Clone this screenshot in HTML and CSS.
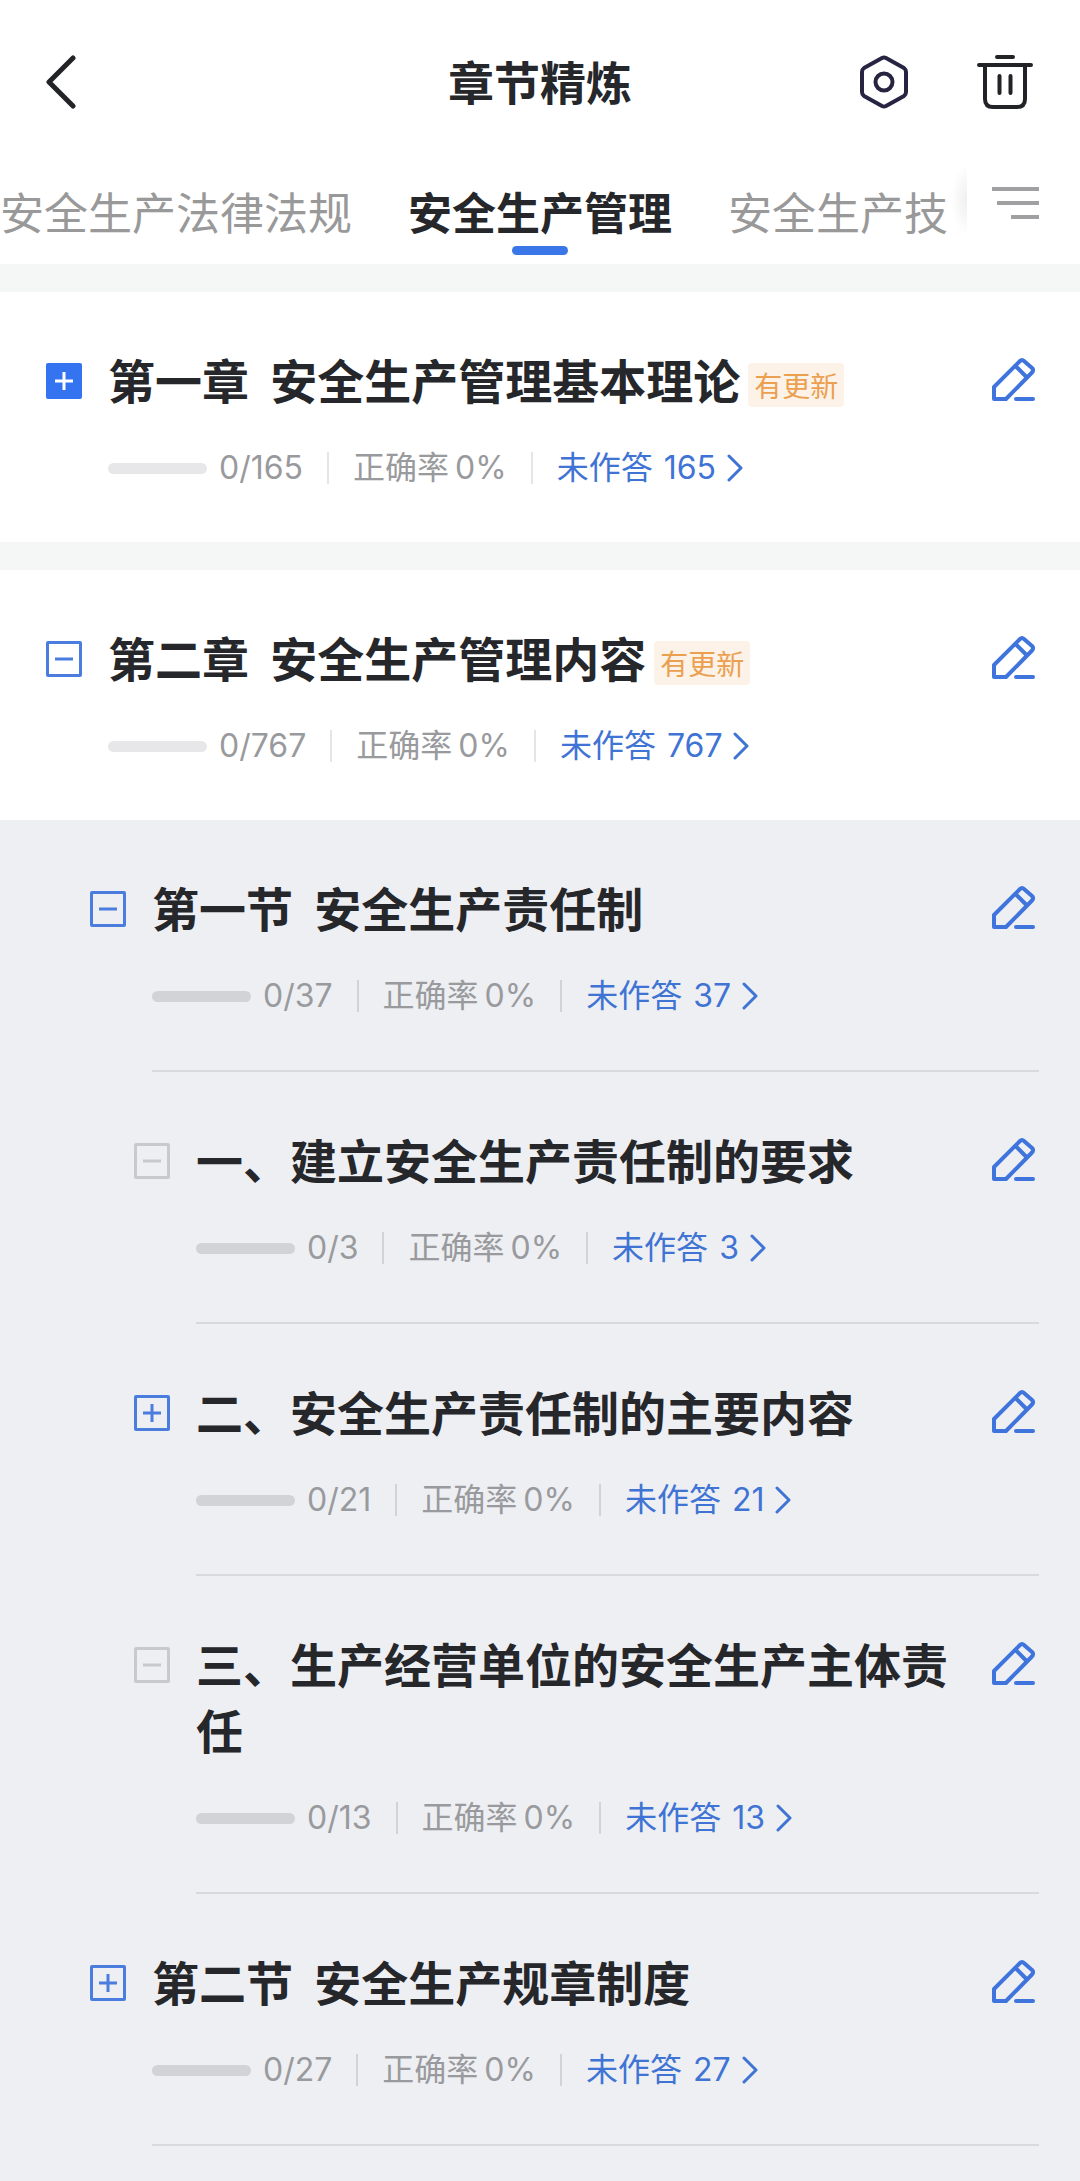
FILE: index.html
```html
<!DOCTYPE html>
<html lang="zh-CN">

<head>
  <meta charset="UTF-8">
  <meta name="viewport" content="width=device-width, initial-scale=1.0">
  <title>章节精炼</title>
  <link rel="stylesheet" href="styles.css">
</head>

<body>
  <!-- Shared icons -->
  <svg class="sprite" aria-hidden="true">
    <symbol id="icon-edit" viewBox="0 0 44 44">
      <path d="M3 42V30L29 4Q31 2 33 4L41 11Q43 13 41 15.500L15 42Z" />
      <path d="M24.500 9L35 19.500" />
      <path d="M25 42H42" />
    </symbol>
    <symbol id="icon-arrow" viewBox="0 0 16 28">
      <path d="M2 2L14 14L2 26" />
    </symbol>
    <symbol id="icon-plus" viewBox="0 0 36 36">
      <path d="M9 18H27M18 9V27" />
    </symbol>
    <symbol id="icon-minus" viewBox="0 0 36 36">
      <path d="M9 18H27" />
    </symbol>
  </svg>

  <header class="navbar">
    <button class="icon-btn" aria-label="返回">
      <svg class="icon-back" viewBox="0 0 32 54"><path d="M27 3L3 27L27 51" /></svg>
    </button>
    <h1 class="navbar-title">章节精炼</h1>
    <div class="navbar-actions">
      <button class="icon-btn" aria-label="设置">
        <svg class="icon-setting" viewBox="0 0 50 54">
          <path d="M23 3Q25 2 27 3L45 13Q47 14.500 47 17V37Q47 39.500 45 41L27 51Q25 52 23 51L5 41Q3 39.500 3 37V17Q3 14.500 5 13Z" />
          <circle cx="25" cy="27" r="8.500" />
        </svg>
      </button>
      <button class="icon-btn" aria-label="删除">
        <svg class="icon-trash" viewBox="0 0 58 56">
          <path d="M21 3H37M3 11H55M9 11V45Q9 53 17 53H41Q49 53 49 45V11M23.500 22V39M34.500 22V39" />
        </svg>
      </button>
    </div>
  </header>

  <nav class="tabs">
    <div class="tabs-list">
      <a class="tab" href="#">安全生产法律法规</a>
      <a class="tab active" href="#">安全生产管理</a>
      <a class="tab" href="#">安全生产技</a>
    </div>
    <button class="icon-btn tabs-more" aria-label="全部科目">
      <svg class="icon-menu" viewBox="0 0 48 34"><path d="M1 3H48M6 17H48M20 31H48" /></svg>
    </button>
  </nav>

  <main>
    <section class="chapter">
      <article class="row">
        <button class="toggle filled" aria-label="展开"><svg><use href="#icon-plus" /></svg></button>
        <div class="content">
          <div class="head">
            <h2 class="title">第一章&nbsp; 安全生产管理基本理论<span class="tag">有更新</span></h2>
            <button class="icon-btn edit" aria-label="练习"><svg><use href="#icon-edit" /></svg></button>
          </div>
          <div class="stats">
            <span class="bar"></span>
            <span class="count">0/165</span>
            <span class="rate">正确率<span class="num">0%</span></span>
            <a class="todo" href="#">未作答 <span>165</span><svg><use href="#icon-arrow" /></svg></a>
          </div>
        </div>
      </article>
    </section>

    <section class="chapter">
      <article class="row">
        <button class="toggle" aria-label="收起"><svg><use href="#icon-minus" /></svg></button>
        <div class="content">
          <div class="head">
            <h2 class="title">第二章&nbsp; 安全生产管理内容<span class="tag">有更新</span></h2>
            <button class="icon-btn edit" aria-label="练习"><svg><use href="#icon-edit" /></svg></button>
          </div>
          <div class="stats">
            <span class="bar"></span>
            <span class="count">0/767</span>
            <span class="rate">正确率<span class="num">0%</span></span>
            <a class="todo" href="#">未作答 <span>767</span><svg><use href="#icon-arrow" /></svg></a>
          </div>
        </div>
      </article>
    </section>

    <section class="sections">
      <article class="row level-2">
        <button class="toggle" aria-label="收起"><svg><use href="#icon-minus" /></svg></button>
        <div class="content">
          <div class="head">
            <h3 class="title">第一节&nbsp; 安全生产责任制</h3>
            <button class="icon-btn edit" aria-label="练习"><svg><use href="#icon-edit" /></svg></button>
          </div>
          <div class="stats">
            <span class="bar"></span>
            <span class="count">0/37</span>
            <span class="rate">正确率<span class="num">0%</span></span>
            <a class="todo" href="#">未作答 <span>37</span><svg><use href="#icon-arrow" /></svg></a>
          </div>
        </div>
      </article>

      <article class="row level-3">
        <button class="toggle disabled" aria-label="收起" disabled><svg><use href="#icon-minus" /></svg></button>
        <div class="content">
          <div class="head">
            <h4 class="title">一、建立安全生产责任制的要求</h4>
            <button class="icon-btn edit" aria-label="练习"><svg><use href="#icon-edit" /></svg></button>
          </div>
          <div class="stats">
            <span class="bar"></span>
            <span class="count">0/3</span>
            <span class="rate">正确率<span class="num">0%</span></span>
            <a class="todo" href="#">未作答 <span>3</span><svg><use href="#icon-arrow" /></svg></a>
          </div>
        </div>
      </article>

      <article class="row level-3">
        <button class="toggle" aria-label="展开"><svg><use href="#icon-plus" /></svg></button>
        <div class="content">
          <div class="head">
            <h4 class="title">二、安全生产责任制的主要内容</h4>
            <button class="icon-btn edit" aria-label="练习"><svg><use href="#icon-edit" /></svg></button>
          </div>
          <div class="stats">
            <span class="bar"></span>
            <span class="count">0/21</span>
            <span class="rate">正确率<span class="num">0%</span></span>
            <a class="todo" href="#">未作答 <span>21</span><svg><use href="#icon-arrow" /></svg></a>
          </div>
        </div>
      </article>

      <article class="row level-3">
        <button class="toggle disabled" aria-label="收起" disabled><svg><use href="#icon-minus" /></svg></button>
        <div class="content">
          <div class="head">
            <h4 class="title">三、生产经营单位的安全生产主体责任</h4>
            <button class="icon-btn edit" aria-label="练习"><svg><use href="#icon-edit" /></svg></button>
          </div>
          <div class="stats">
            <span class="bar"></span>
            <span class="count">0/13</span>
            <span class="rate">正确率<span class="num">0%</span></span>
            <a class="todo" href="#">未作答 <span>13</span><svg><use href="#icon-arrow" /></svg></a>
          </div>
        </div>
      </article>

      <article class="row level-2">
        <button class="toggle" aria-label="展开"><svg><use href="#icon-plus" /></svg></button>
        <div class="content">
          <div class="head">
            <h3 class="title">第二节&nbsp; 安全生产规章制度</h3>
            <button class="icon-btn edit" aria-label="练习"><svg><use href="#icon-edit" /></svg></button>
          </div>
          <div class="stats">
            <span class="bar"></span>
            <span class="count">0/27</span>
            <span class="rate">正确率<span class="num">0%</span></span>
            <a class="todo" href="#">未作答 <span>27</span><svg><use href="#icon-arrow" /></svg></a>
          </div>
        </div>
      </article>
    </section>
  </main>
</body>

</html>
```

FILE: styles.css
```css
* {
  box-sizing: border-box;
}

body {
  margin: 0;
  min-height: 100vh;
  background-color: #eeeff3;
  color: #25272b;
  font-family: Inter, "Noto Sans CJK SC", sans-serif;
}

h1,
h2,
h3,
h4 {
  margin: 0;
  font-family: "Noto Sans CJK SC", sans-serif;
  font-weight: 700;
}

a {
  color: inherit;
  text-decoration: none;
}

svg {
  display: block;
  fill: none;
  stroke: currentColor;
  stroke-linecap: round;
  stroke-linejoin: round;
}

.sprite {
  display: none;
}

.icon-btn {
  padding: 0;
  border: none;
  background: none;
  color: #222327;
  cursor: pointer;
}

/* Top bar */
.navbar {
  display: grid;
  grid-template-columns: 1fr auto 1fr;
  align-items: center;
  height: 164px;
  padding: 0 46px;
  background-color: #fff;
}

.navbar .icon-btn {
  justify-self: start;
}

.navbar-title {
  padding-bottom: 4px;
  font-size: 46px;
  line-height: 66px;
}

.navbar-actions {
  display: flex;
  justify-content: flex-end;
  align-items: center;
  gap: 67px;
}

.icon-back {
  width: 32px;
  height: 54px;
  stroke-width: 5;
}

.icon-setting {
  width: 50px;
  height: 54px;
  color: #262440;
  stroke-width: 4;
}

.icon-trash {
  width: 58px;
  height: 56px;
  stroke-width: 4;
}

/* Subject tabs */
.tabs {
  display: flex;
  height: 100px;
  background-color: #fff;
}

.tabs-list {
  display: flex;
  flex: 1;
  gap: 56px;
  min-width: 0;
  overflow: hidden;
}

.tab {
  position: relative;
  flex: none;
  height: 100px;
  color: #999;
  font-family: "Noto Sans CJK SC", sans-serif;
  font-size: 44px;
  line-height: 94px;
}

.tab.active {
  color: #25272b;
  font-weight: 700;
}

.tab.active::after {
  content: '';
  position: absolute;
  left: 50%;
  bottom: 9px;
  width: 56px;
  height: 9px;
  margin-left: -28px;
  border-radius: 5px;
  background-color: #3a76e8;
}

.tabs-more {
  display: flex;
  gap: 24px;
  padding-right: 41px;
  color: #a0a0a3;
}

.tabs-more::before {
  content: '';
  width: 16px;
  height: 72px;
  background: radial-gradient(ellipse at right, #efefef, #fff 70%);
}

.icon-menu {
  width: 48px;
  height: 34px;
  margin-top: 22px;
  stroke-width: 4;
  stroke-linecap: butt;
}

/* Chapter list */
.chapter {
  border-top: 28px solid #f5f7f7;
  background-color: #fff;
}

.sections {
  background-color: #eeeff3;
}

.row {
  display: flex;
  gap: 26px;
  padding: 0 41px 0 46px;
}

.level-2 {
  padding-left: 90px;
}

.level-3 {
  padding-left: 134px;
}

.toggle {
  flex: none;
  width: 36px;
  height: 36px;
  margin-top: 71px;
  padding: 0;
  border: 3px solid #4a7ddd;
  border-radius: 2px;
  background: none;
  color: #4a7ddd;
  cursor: pointer;
}

.toggle svg {
  width: 36px;
  height: 36px;
  margin: -3px;
  stroke-width: 3;
  stroke-linecap: butt;
}

.toggle.filled {
  border-color: #3474f0;
  background-color: #3474f0;
  color: #fff;
}

.toggle.disabled {
  border-color: #c8c9cc;
  color: #c8c9cc;
}

.content {
  flex: 1;
  min-width: 0;
  padding: 54px 0 58px;
}

.sections .content {
  border-bottom: 2px solid #d8d9dd;
}

.head {
  display: flex;
  justify-content: space-between;
  gap: 32px;
}

.title {
  font-size: 47px;
  line-height: 66px;
}

.tag {
  display: inline-block;
  margin-left: 8px;
  padding: 0 6px;
  border-radius: 4px;
  background-color: #fdf2e8;
  color: #eba050;
  font-size: 28px;
  font-weight: 400;
  line-height: 44px;
  vertical-align: 2px;
}

.edit {
  flex: none;
  align-self: flex-start;
  margin: 11px 4px 0 0;
  color: #3f74dc;
}

.edit svg {
  width: 44px;
  height: 44px;
  stroke-width: 4;
}

.stats {
  display: flex;
  align-items: center;
  height: 32px;
  margin-top: 40px;
  color: #999a9d;
  font-size: 32px;
  line-height: 32px;
}

.bar {
  width: 99px;
  height: 11px;
  margin-right: 12px;
  border-radius: 6px;
  background-color: #e7e7e9;
}

.sections .bar {
  background-color: #d2d3d6;
}

.rate,
.todo {
  margin-left: 24px;
  padding-left: 24px;
  border-left: 2px solid #e4e5e7;
}

.sections .rate,
.sections .todo {
  border-color: #d2d3d6;
}

.num {
  margin-left: 6px;
}

.todo {
  display: flex;
  align-items: center;
  gap: 11px;
  color: #3f74d4;
}

.todo svg {
  width: 16px;
  height: 28px;
  stroke-width: 3;
}
```
